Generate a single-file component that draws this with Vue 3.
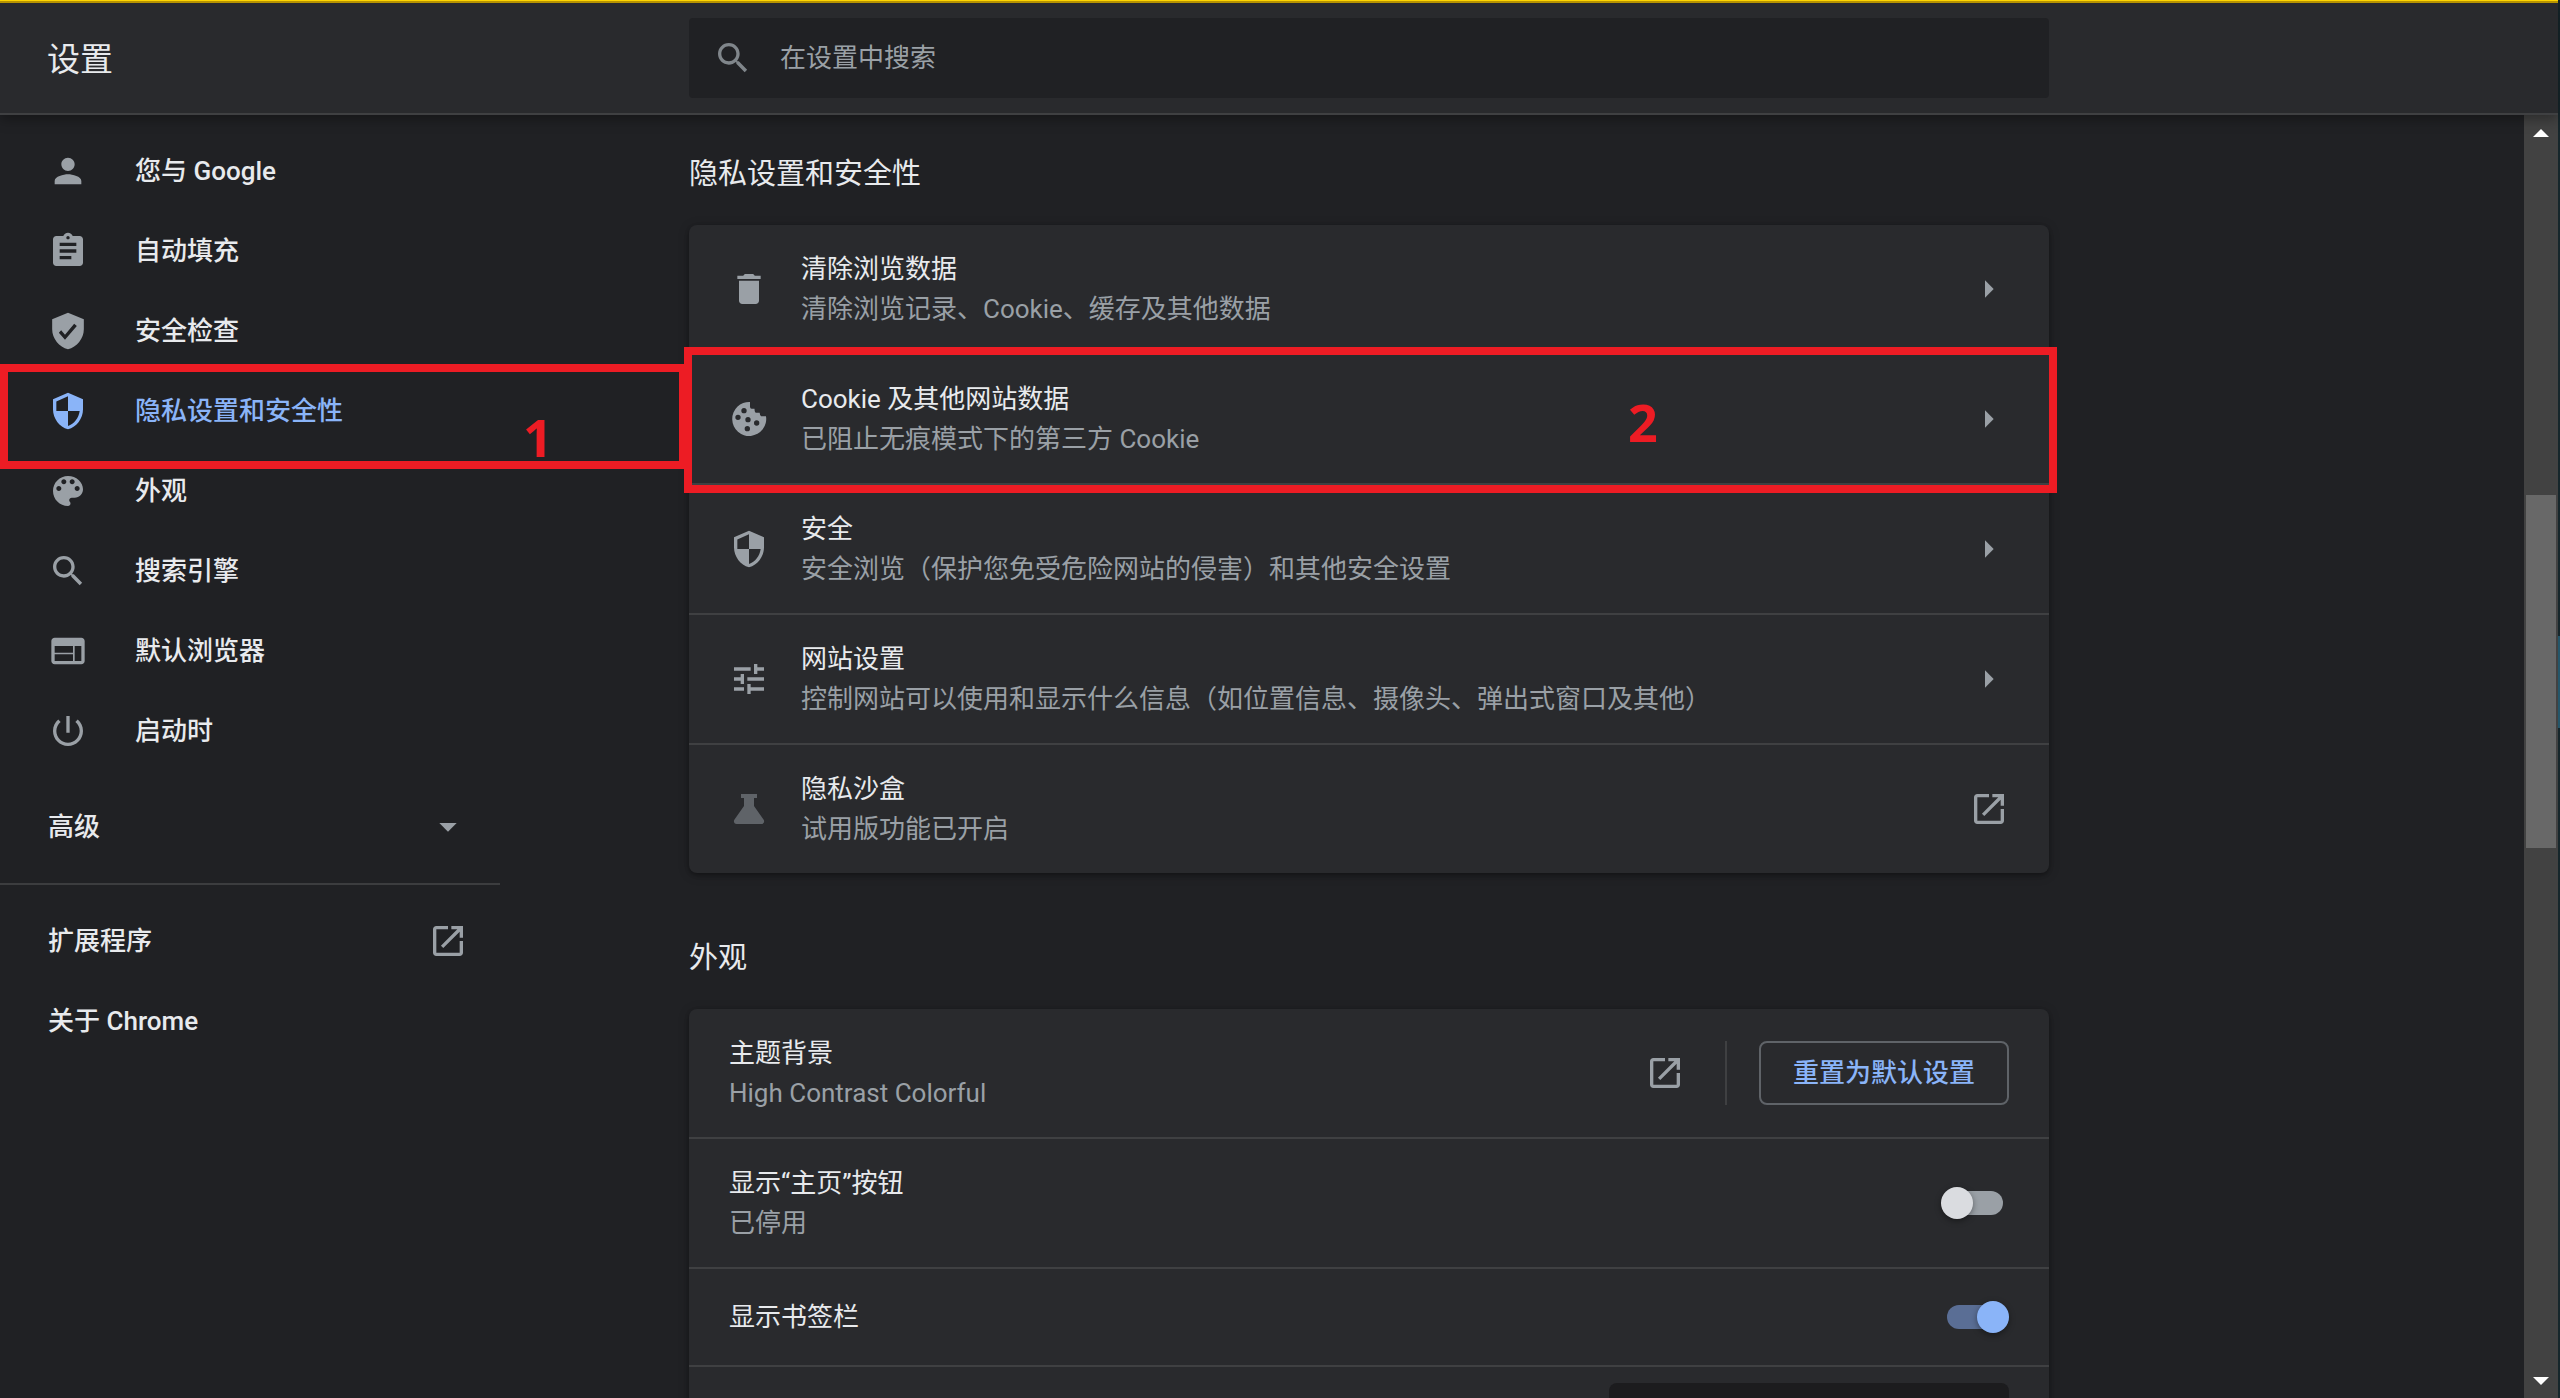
<script setup>
import { ref } from 'vue'

const icons = {
  person: 'M12 12c2.21 0 4-1.79 4-4s-1.79-4-4-4-4 1.79-4 4 1.79 4 4 4zm0 2c-2.67 0-8 1.34-8 4v2h16v-2c0-2.66-5.33-4-8-4z',
  autofill: 'M19 3h-4.18C14.4 1.84 13.3 1 12 1c-1.3 0-2.4.84-2.82 2H5c-1.1 0-2 .9-2 2v14c0 1.1.9 2 2 2h14c1.1 0 2-.9 2-2V5c0-1.1-.9-2-2-2zm-7 0c.55 0 1 .45 1 1s-.45 1-1 1-1-.45-1-1 .45-1 1-1zm2 14H7v-2h7v2zm3-4H7v-2h10v2zm0-4H7V7h10v2z',
  check: 'M12 1L2.5 5v6c0 5.55 4.2 10.74 9.5 12 5.3-1.26 9.5-6.45 9.5-12V5L12 1zm-1.8 16.2l-3.7-4.2 1.4-1.4 2.3 2.6 5.5-6.6L17.3 9l-7.1 8.2z',
  shield: 'M12 1L3 5v6c0 5.55 3.84 10.74 9 12 5.16-1.26 9-6.45 9-12V5l-9-4zm0 10.99h7c-.53 4.12-3.28 7.79-7 8.94V12H5V6.3l7-3.11v8.8z',
  palette: 'M12 3c-4.97 0-9 4.03-9 9s4.03 9 9 9c.83 0 1.5-.67 1.5-1.5 0-.39-.15-.74-.39-1.01-.23-.26-.38-.61-.38-.99 0-.83.67-1.5 1.5-1.5H16c2.76 0 5-2.24 5-5 0-4.42-4.03-8-9-8zm-5.5 9c-.83 0-1.5-.67-1.5-1.5S5.67 9 6.5 9 8 9.67 8 10.5 7.33 12 6.5 12zm3-4C8.67 8 8 7.33 8 6.5S8.67 5 9.5 5s1.5.67 1.5 1.5S10.33 8 9.5 8zm5 0c-.83 0-1.5-.67-1.5-1.5S13.67 5 14.5 5s1.5.67 1.5 1.5S15.33 8 14.5 8zm3 4c-.83 0-1.5-.67-1.5-1.5S16.67 9 17.5 9s1.5.67 1.5 1.5-.67 1.5-1.5 1.5z',
  search: 'M15.5 14h-.79l-.28-.27C15.41 12.59 16 11.11 16 9.5 16 5.91 13.09 3 9.5 3S3 5.91 3 9.5 5.91 16 9.5 16c1.61 0 3.09-.59 4.23-1.57l.27.28v.79l5 4.99L20.49 19l-4.99-5zm-6 0C7.01 14 5 11.99 5 9.5S7.01 5 9.5 5 14 7.01 14 9.5 11.99 14 9.5 14z',
  browser: 'M20 4H4c-1.1 0-1.99.9-1.99 2L2 18c0 1.1.9 2 2 2h16c1.1 0 2-.9 2-2V6c0-1.1-.9-2-2-2zm-5 14H4v-4h11v4zm0-5H4V9h11v4zm5 5h-4V9h4v9z',
  power: 'M13 3h-2v10h2V3zm4.83 2.17l-1.42 1.42C17.99 7.86 19 9.81 19 12c0 3.87-3.13 7-7 7s-7-3.13-7-7c0-2.19 1.01-4.14 2.58-5.42L6.17 5.17C4.23 6.82 3 9.26 3 12c0 4.97 4.03 9 9 9s9-4.03 9-9c0-2.74-1.23-5.18-3.17-6.83z',
  trash: 'M6 19c0 1.1.9 2 2 2h8c1.1 0 2-.9 2-2V7H6v12zM19 4h-3.5l-1-1h-5l-1 1H5v2h14V4z',
  cookie: 'M12.6 1.8A10.2 10.2 0 1 0 22.2 10.3H19.3Q18.5 10.2 18.4 8.3H16.2Q15.4 8.2 15.3 5.9H13.6Q12.6 5.6 12.6 4.6zM9 5.4a1.6 1.6 0 1 1 0 3.2 1.6 1.6 0 0 1 0-3.2zM5.4 9.4a1.6 1.6 0 1 1 0 3.2 1.6 1.6 0 0 1 0-3.2zM11.4 10.8a1.6 1.6 0 1 1 0 3.2 1.6 1.6 0 0 1 0-3.2zM16.6 12.8a1.6 1.6 0 1 1 0 3.2 1.6 1.6 0 0 1 0-3.2zM11 16.2a1.6 1.6 0 1 1 0 3.2 1.6 1.6 0 0 1 0-3.2z',
  tune: 'M3 17v2h6v-2H3zM3 5v2h10V5H3zm10 16v-2h8v-2h-8v-2h-2v6h2zM7 9v2H3v2h4v2h2V9H7zm14 4v-2H11v2h10zm-6-4h2V7h4V5h-4V3h-2v6z',
  flask: 'M7.2 3h9.6v2.4H15v4.8l5.8 8.2c.7 1.2 0 2.6-1.3 2.6h-15c-1.3 0-2-1.4-1.3-2.6L9 10.2V5.4H7.2z',
  launch: 'M19 19H5V5h7V3H5c-1.11 0-2 .9-2 2v14c0 1.1.89 2 2 2h14c1.1 0 2-.9 2-2v-7h-2v7zM14 3v2h3.59l-9.83 9.83 1.41 1.41L19 6.41V10h2V3h-7z',
  right: 'M9.6 6.8L14.8 12l-5.2 5.2z',
  down: 'M6.8 9.6h10.4L12 14.8z'
}

const nav = [
  { icon: 'person', label: '您与 Google' },
  { icon: 'autofill', label: '自动填充' },
  { icon: 'check', label: '安全检查' },
  { icon: 'shield', label: '隐私设置和安全性', active: true, mark: '1' },
  { icon: 'palette', label: '外观' },
  { icon: 'search', label: '搜索引擎' },
  { icon: 'browser', label: '默认浏览器' },
  { icon: 'power', label: '启动时' }
]

const privacy = [
  { icon: 'trash', title: '清除浏览数据', sub: '清除浏览记录、Cookie、缓存及其他数据', action: 'right' },
  { icon: 'cookie', title: 'Cookie 及其他网站数据', sub: '已阻止无痕模式下的第三方 Cookie', action: 'right', mark: '2' },
  { icon: 'shield', title: '安全', sub: '安全浏览（保护您免受危险网站的侵害）和其他安全设置', action: 'right' },
  { icon: 'tune', title: '网站设置', sub: '控制网站可以使用和显示什么信息（如位置信息、摄像头、弹出式窗口及其他）', action: 'right' },
  { icon: 'flask', title: '隐私沙盒', sub: '试用版功能已开启', action: 'launch', dim: true }
]

const query = ref('')
const homeButton = ref(false)
const bookmarks = ref(true)
</script>

<template>
  <div class="window">
    <div class="page">
      <header class="toolbar">
        <h1>设置</h1>
        <label class="search">
          <svg class="icon" viewBox="0 0 24 24"><path :d="icons.search" /></svg>
          <input v-model="query" type="text" placeholder="在设置中搜索" aria-label="在设置中搜索" />
        </label>
      </header>

      <div class="body">
        <div class="columns">
          <nav class="sidebar">
            <a v-for="item in nav" :key="item.label" href="#" class="nav-item" :class="{ active: item.active }">
              <svg class="icon" viewBox="0 0 24 24"><path :d="icons[item.icon]" /></svg>
              <span>{{ item.label }}</span>
              <span v-if="item.mark" class="mark mark-nav">{{ item.mark }}</span>
            </a>
            <button type="button" class="advanced">
              <span>高级</span>
              <svg class="icon" viewBox="0 0 24 24"><path :d="icons.down" /></svg>
            </button>
            <div class="extra">
              <a href="#" class="extra-item">
                <span>扩展程序</span>
                <svg class="icon" viewBox="0 0 24 24"><path :d="icons.launch" /></svg>
              </a>
              <a href="#" class="extra-item"><span>关于 Chrome</span></a>
            </div>
          </nav>

          <main class="main">
            <section>
              <h2>隐私设置和安全性</h2>
              <div class="card">
                <div v-for="row in privacy" :key="row.title" class="row with-icon">
                  <svg class="icon" :class="{ dim: row.dim }" viewBox="0 0 24 24"><path :d="icons[row.icon]" fill-rule="evenodd" /></svg>
                  <div class="text">
                    <div class="title">{{ row.title }}</div>
                    <div class="sub">{{ row.sub }}</div>
                  </div>
                  <button type="button" class="icon-button" :aria-label="row.title">
                    <svg class="icon" viewBox="0 0 24 24"><path :d="icons[row.action]" /></svg>
                  </button>
                  <span v-if="row.mark" class="mark mark-row">{{ row.mark }}</span>
                </div>
              </div>
            </section>

            <section>
              <h2>外观</h2>
              <div class="card">
                <div class="row">
                  <div class="text">
                    <div class="title">主题背景</div>
                    <div class="sub">High Contrast Colorful</div>
                  </div>
                  <button type="button" class="icon-button" aria-label="主题背景">
                    <svg class="icon" viewBox="0 0 24 24"><path :d="icons.launch" /></svg>
                  </button>
                  <div class="separator"></div>
                  <button type="button" class="reset">重置为默认设置</button>
                </div>
                <div class="row">
                  <label class="text" for="home-button">
                    <span class="title">显示“主页”按钮</span>
                    <span class="sub">已停用</span>
                  </label>
                  <input id="home-button" v-model="homeButton" class="toggle" type="checkbox" />
                </div>
                <div class="row short">
                  <label class="text title" for="bookmarks">显示书签栏</label>
                  <input id="bookmarks" v-model="bookmarks" class="toggle" type="checkbox" />
                </div>
                <div class="row short">
                  <select class="select" aria-label="字号"></select>
                </div>
              </div>
            </section>
          </main>
        </div>

        <div class="scrollbar" aria-hidden="true">
          <svg class="scroll-arrow" viewBox="0 0 34 34"><path d="M17 14l8 8H9z" /></svg>
          <div class="track"><div class="thumb"></div></div>
          <svg class="scroll-arrow" viewBox="0 0 34 34"><path d="M9 13h16l-8 8z" /></svg>
        </div>
      </div>
    </div>
    <div class="desktop-edge"></div>
  </div>
</template>

<style>
body {
  margin: 0;
  background: #202124;
}
</style>

<style scoped>
.window {
  display: flex;
  height: 100vh;
  overflow: hidden;
  background: #202124;
  color: #e8eaed;
  font-family: Roboto, "Noto Sans CJK SC", sans-serif;
  font-size: 26px;
  line-height: 40px;
}

.window *,
.window *::before {
  box-sizing: border-box;
}

.page {
  flex: 1;
  min-width: 0;
  display: flex;
  flex-direction: column;
}

.desktop-edge {
  width: 2px;
  background: linear-gradient(#16262b 0 636px, #24566a 636px 728px, #16262b 728px);
}

button,
input,
select {
  font: inherit;
  color: inherit;
}

.icon {
  flex: none;
  display: block;
  width: 40px;
  height: 40px;
  fill: #9aa0a6;
}

.icon.dim {
  fill: #5f6368;
}

/* Toolbar */
.toolbar {
  position: relative;
  z-index: 3;
  display: grid;
  grid-template-columns: 689fr minmax(0, 1360px) 509fr;
  align-items: center;
  height: 115px;
  flex: none;
  border-top: 3px solid #b89400;
  border-bottom: 2px solid #3f4042;
  background: #292a2d;
  box-shadow: 0 4px 12px rgba(0, 0, 0, 0.35);
}

.toolbar::before {
  content: "";
  position: absolute;
  top: -3px;
  left: 0;
  right: 0;
  height: 1px;
  background: #ffd500;
}

h1 {
  margin: 0;
  padding: 4px 0 0 47px;
  font-size: 33px;
  font-weight: 400;
}

.search {
  display: flex;
  align-items: center;
  height: 80px;
  padding: 0 24px;
  border-radius: 4px;
  background: #202124;
}

.search .icon {
  fill: #80868b;
}

.search input {
  flex: 1;
  min-width: 0;
  margin-left: 27px;
  padding: 0;
  border: 0;
  outline: 0;
  background: none;
}

.search input::placeholder {
  color: #9aa0a6;
  opacity: 1;
}

/* Columns */
.body {
  flex: 1;
  min-height: 0;
  display: flex;
}

.columns {
  flex: 1;
  min-width: 0;
  display: grid;
  grid-template-columns: 689fr minmax(0, 1360px) 475fr;
  overflow: hidden;
}

/* Sidebar */
.sidebar {
  padding-top: 16px;
  font-weight: 500;
}

.nav-item,
.extra-item {
  position: relative;
  display: flex;
  align-items: center;
  height: 80px;
  padding-left: 48px;
  color: #e8eaed;
  text-decoration: none;
}

.nav-item .icon {
  margin-right: 47px;
}

.nav-item.active {
  z-index: 1;
  color: #8ab4f8;
}

.nav-item.active .icon {
  fill: #8ab4f8;
}

.advanced {
  display: flex;
  align-items: center;
  justify-content: space-between;
  width: 500px;
  height: 80px;
  margin: 16px 0;
  padding: 0 32px 0 48px;
  border: 0;
  background: none;
}

.extra {
  width: 500px;
  padding-top: 16px;
  border-top: 2px solid #3c3d3f;
}

.extra-item {
  justify-content: space-between;
  padding-right: 32px;
}

/* Callouts drawn over the page */
.mark {
  position: absolute;
  border: 8px solid #ed1c24;
  color: #ed1c24;
  font-family: "Open Sans", sans-serif;
  font-size: 52px;
  font-weight: 700;
  line-height: 64px;
}

.mark-nav {
  inset: -7px 2px -18px 0;
  padding: 33px 0 0 515px;
}

.mark-row {
  inset: -8px -8px -10px -5px;
  padding: 35px 0 0 936px;
}

/* Cards */
.main {
  padding-top: 39px;
}

section + section {
  margin-top: 65px;
}

h2 {
  margin: 0 0 31px;
  font-size: 29px;
  font-weight: 400;
  line-height: 40px;
}

.card {
  border-radius: 8px;
  background: #292a2d;
  box-shadow: 0 2px 4px rgba(0, 0, 0, 0.3), 0 2px 12px rgba(0, 0, 0, 0.2);
}

.row {
  position: relative;
  display: flex;
  align-items: center;
  height: 128px;
  padding: 0 40px;
}

.row + .row {
  height: 130px;
  border-top: 2px solid #3f4042;
}

.row + .row.short {
  height: 98px;
}

.row:has(.mark) {
  z-index: 1;
}

.with-icon > .icon {
  margin-right: 32px;
}

.text {
  flex: 1;
  min-width: 0;
}

.title,
.sub {
  display: block;
}

.sub {
  color: #9aa0a6;
}

.icon-button {
  padding: 0;
  border: 0;
  background: none;
}

.separator {
  width: 2px;
  height: 64px;
  margin: 0 32px 0 40px;
  background: #3f4042;
}

.reset {
  width: 250px;
  height: 64px;
  padding: 0;
  border: 2px solid #5f6368;
  border-radius: 8px;
  background: none;
  color: #8ab4f8;
  font-weight: 500;
}

.toggle {
  appearance: none;
  position: relative;
  width: 68px;
  height: 32px;
  margin: 0;
}

.toggle::before {
  content: "";
  position: absolute;
  inset: 4px 6px;
  border-radius: 12px;
  background: #9aa0a6;
}

.toggle::after {
  content: "";
  position: absolute;
  top: 0;
  left: 0;
  width: 32px;
  height: 32px;
  border-radius: 50%;
  background: #dadce0;
  box-shadow: 0 2px 6px rgba(0, 0, 0, 0.4);
}

.toggle:checked::before {
  background: #5a6e95;
}

.toggle:checked::after {
  left: 36px;
  background: #8ab4f8;
}

.select {
  appearance: none;
  width: 400px;
  height: 64px;
  margin-left: auto;
  border: 0;
  border-radius: 8px;
  background: #1c1c1e;
}

/* Scrollbar */
.scrollbar {
  display: flex;
  flex-direction: column;
  width: 34px;
  background: #424242;
}

.scroll-arrow {
  display: block;
  width: 34px;
  height: 34px;
  fill: #fff;
}

.track {
  flex: 1;
  padding: 0 2px;
  display: grid;
  grid-template-rows: 346fr 353fr 516fr;
}

.thumb {
  grid-row: 2;
  background: #686868;
}
</style>
